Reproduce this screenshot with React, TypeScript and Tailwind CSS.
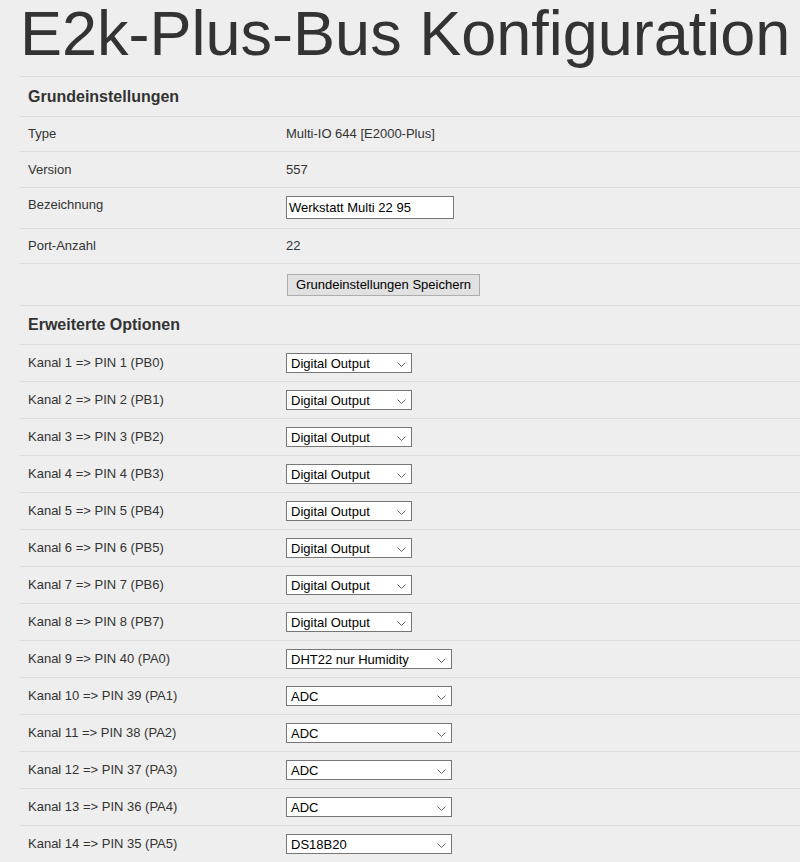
import React from 'react';

const kanaele = [
  { label: 'Kanal 1 => PIN 1 (PB0)', value: 'Digital Output', wide: false },
  { label: 'Kanal 2 => PIN 2 (PB1)', value: 'Digital Output', wide: false },
  { label: 'Kanal 3 => PIN 3 (PB2)', value: 'Digital Output', wide: false },
  { label: 'Kanal 4 => PIN 4 (PB3)', value: 'Digital Output', wide: false },
  { label: 'Kanal 5 => PIN 5 (PB4)', value: 'Digital Output', wide: false },
  { label: 'Kanal 6 => PIN 6 (PB5)', value: 'Digital Output', wide: false },
  { label: 'Kanal 7 => PIN 7 (PB6)', value: 'Digital Output', wide: false },
  { label: 'Kanal 8 => PIN 8 (PB7)', value: 'Digital Output', wide: false },
  { label: 'Kanal 9 => PIN 40 (PA0)', value: 'DHT22 nur Humidity', wide: true },
  { label: 'Kanal 10 => PIN 39 (PA1)', value: 'ADC', wide: true },
  { label: 'Kanal 11 => PIN 38 (PA2)', value: 'ADC', wide: true },
  { label: 'Kanal 12 => PIN 37 (PA3)', value: 'ADC', wide: true },
  { label: 'Kanal 13 => PIN 36 (PA4)', value: 'ADC', wide: true },
  { label: 'Kanal 14 => PIN 35 (PA5)', value: 'DS18B20', wide: true },
];

function Chevron() {
  return (
    <svg width="9" height="5" viewBox="0 0 9 5" className="absolute right-[5px] top-[8px]">
      <path d="M0.5 0.5 L4.5 4.5 L8.5 0.5" fill="none" stroke="#666" strokeWidth="1" />
    </svg>
  );
}

function Auswahl({ value, wide }: { value: string; wide: boolean }) {
  return (
    <div
      className={
        'relative flex h-[20px] items-center border border-[#767676] bg-white pl-[4px] text-[13px] leading-none text-black ' +
        (wide ? 'w-[166px]' : 'w-[126px]')
      }
    >
      {value}
      <Chevron />
    </div>
  );
}

export default function App() {
  return (
    <div className="min-h-screen overflow-hidden bg-[#eeeeee] pl-[20px] font-['Liberation_Sans',Arial,sans-serif] text-[#333333]">
      <h1 className="whitespace-nowrap text-[63px] font-normal leading-[66px]">E2k-Plus-Bus Konfiguration</h1>

      <div className="mt-[10px] w-[800px] text-[13px]">
        <div className="flex h-[40px] items-center border-t border-[#dddddd] px-[8px] text-[16px] font-bold">
          Grundeinstellungen
        </div>

        <div className="flex h-[35px] items-center border-t border-[#dddddd]">
          <div className="w-[258px] px-[8px]">Type</div>
          <div className="px-[8px]">Multi-IO 644 [E2000-Plus]</div>
        </div>

        <div className="flex h-[36px] items-center border-t border-[#dddddd]">
          <div className="w-[258px] px-[8px]">Version</div>
          <div className="px-[8px]">557</div>
        </div>

        <div className="flex h-[41px] items-start border-t border-[#dddddd] pt-[8px]">
          <div className="w-[258px] px-[8px] -mt-[1px]">Bezeichnung</div>
          <div className="px-[8px]">
            <div className="flex h-[23px] w-[168px] items-center border border-[#767676] bg-white pl-[2px] text-black">
              Werkstatt Multi 22 95
            </div>
          </div>
        </div>

        <div className="flex h-[35px] items-center border-t border-[#dddddd]">
          <div className="w-[258px] px-[8px]">Port-Anzahl</div>
          <div className="px-[8px]">22</div>
        </div>

        <div className="flex h-[42px] items-center border-t border-[#dddddd]">
          <div className="w-[258px] px-[8px]"></div>
          <div className="pl-[9px]">
            <button className="h-[22px] w-[193px] border border-[#adadad] bg-[#e1e1e1] text-[13px] text-black">
              Grundeinstellungen Speichern
            </button>
          </div>
        </div>

        <div className="flex h-[39px] items-center border-t border-[#dddddd] px-[8px] text-[16px] font-bold">
          Erweiterte Optionen
        </div>

        {kanaele.map((k) => (
          <div key={k.label} className="flex h-[37px] items-center border-t border-[#dddddd]">
            <div className="w-[258px] px-[8px]">{k.label}</div>
            <div className="px-[8px]">
              <Auswahl value={k.value} wide={k.wide} />
            </div>
          </div>
        ))}
      </div>
    </div>
  );
}
